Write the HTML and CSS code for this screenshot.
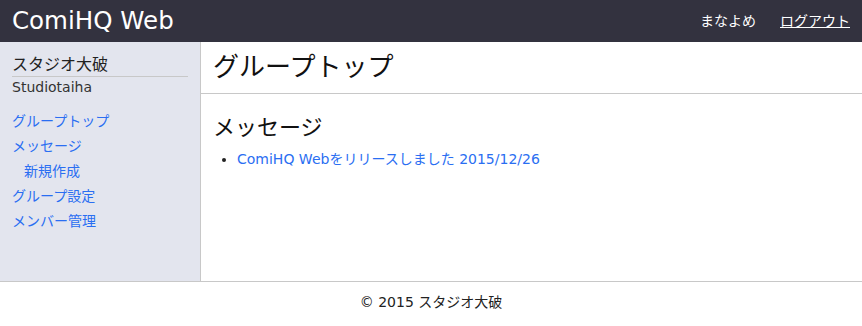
FILE: index.html
```html
<!DOCTYPE html>
<html lang="ja">
<head>
<meta charset="utf-8">
<title>ComiHQ Web</title>
<link rel="stylesheet" href="styles.css">
</head>
<body>
<header class="topbar">
  <a class="brand" href="#">ComiHQ Web</a>
  <nav class="user-nav">
    <span class="user-name">まなよめ</span>
    <a class="logout" href="#">ログアウト</a>
  </nav>
</header>
<div class="layout">
  <aside class="sidebar">
    <div class="group-name">スタジオ大破</div>
    <div class="group-id">Studiotaiha</div>
    <ul class="side-menu">
      <li><a href="#">グループトップ</a></li>
      <li><a href="#">メッセージ</a></li>
      <li class="sub"><a href="#">新規作成</a></li>
      <li><a href="#">グループ設定</a></li>
      <li><a href="#">メンバー管理</a></li>
    </ul>
  </aside>
  <main class="content">
    <h1 class="page-title">グループトップ</h1>
    <section class="section">
      <h2 class="section-title">メッセージ</h2>
      <ul class="msg-list">
        <li><a href="#">ComiHQ Webをリリースしました 2015/12/26</a></li>
      </ul>
    </section>
  </main>
</div>
<footer class="footer">© 2015 スタジオ大破</footer>
</body>
</html>
```
FILE: styles.css
```css
* { box-sizing: border-box; }
html, body { margin: 0; padding: 0; }
body {
  font-family: "DejaVu Sans", "Noto Sans CJK JP", sans-serif;
  font-size: 14px;
  color: #222;
  background: #fff;
  width: 862px;
  height: 326px;
  display: flex;
  flex-direction: column;
}
a { text-decoration: none; color: #2a6ef2; }

.topbar {
  height: 42px;
  background: #33323f;
  display: flex;
  align-items: center;
  justify-content: space-between;
  padding: 0 12px;
  flex: none;
}
.brand {
  color: #fff;
  font-size: 24.5px;
  line-height: 42px;
}
.user-nav {
  display: flex;
  gap: 24px;
  color: #fff;
  font-size: 14px;
  line-height: 20px;
}
.user-nav .logout { color: #fff; text-decoration: underline; }

.layout {
  display: flex;
  height: 239px;
  flex: none;
}
.sidebar {
  width: 201px;
  background: #e3e5ee;
  border-right: 1px solid #c8c8c8;
  padding: 11px 12px 0 12px;
}
.group-name {
  font-size: 16px;
  color: #222;
  width: 176px;
  line-height: 23px;
  border-bottom: 1px solid #c8c8c8;
}
.group-id {
  font-size: 14px;
  color: #333;
  line-height: 20px;
  margin-top: 0;
}
.side-menu {
  list-style: none;
  margin: 12px 0 0 0;
  padding: 0;
}
.side-menu li { line-height: 25px; font-size: 14px; }
.side-menu li.sub { padding-left: 12px; }

.content { flex: 1; }
.page-title {
  margin: 0;
  font-size: 26px;
  font-weight: normal;
  line-height: 51px;
  padding: 0 12px;
  border-bottom: 1px solid #c8c8c8;
  color: #111;
}
.section { padding: 0 14px 0 12px; }
.section-title {
  margin: 18px 0 4px 0;
  font-size: 22px;
  font-weight: normal;
  line-height: 32px;
  color: #111;
}
.msg-list {
  margin: 0;
  padding-left: 24px;
  line-height: 22px;
}

.footer {
  border-top: 1px solid #c8c8c8;
  text-align: center;
  padding-top: 10px;
  font-size: 14px;
  color: #222;
  line-height: 20px;
  flex: 1;
}
```
